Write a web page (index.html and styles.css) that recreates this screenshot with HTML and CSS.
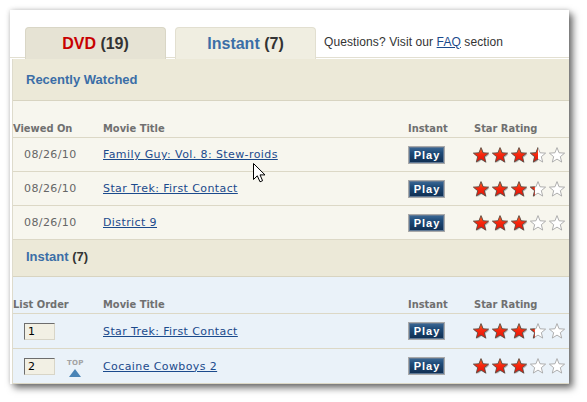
FILE: index.html
```html
<!DOCTYPE html>
<html>
<head>
<meta charset="utf-8">
<link rel="stylesheet" href="styles.css">
</head>
<body>
<svg class="defs" width="0" height="0" aria-hidden="true">
  <defs>
    <linearGradient id="redFill" x1="0" y1="0" x2="0" y2="1">
      <stop offset="0" stop-color="#ff6a2a"/>
      <stop offset="0.45" stop-color="#f8280e"/>
      <stop offset="1" stop-color="#e0140a"/>
    </linearGradient>
    <clipPath id="c50"><rect x="-1" y="-1" width="9" height="19"/></clipPath>
    <clipPath id="c30"><rect x="-1" y="-1" width="5.8" height="19"/></clipPath>
    <g id="sf">
      <polygon points="9,2.6 11.06,7.77 16.61,8.13 12.33,11.68 13.7,17.07 9,14.1 4.3,17.07 5.67,11.68 1.39,8.13 6.94,7.77" fill="#a9a9a9" opacity="0.8"/>
      <polygon points="8,1.6 10.06,6.77 15.61,7.13 11.33,10.68 12.7,16.07 8,13.1 3.3,16.07 4.67,10.68 0.39,7.13 5.94,6.77" fill="url(#redFill)" stroke="#5b4a3f" stroke-width="0.9" stroke-linejoin="round"/>
    </g>
    <g id="se">
      <polygon points="8,1.6 10.06,6.77 15.61,7.13 11.33,10.68 12.7,16.07 8,13.1 3.3,16.07 4.67,10.68 0.39,7.13 5.94,6.77" fill="#fff" stroke="#a6a6a6" stroke-width="0.9" stroke-linejoin="round"/>
    </g>
  </defs>
</svg>

<div class="window">
  <div class="tabbar">
    <div class="tab tab-dvd"><span class="red">DVD</span>&nbsp;<span class="dark">(19)</span></div>
    <div class="tab tab-instant"><span class="blue">Instant</span>&nbsp;<span class="dark">(7)</span></div>
    <div class="questions">Questions? Visit our <a href="#">FAQ</a> section</div>
  </div>

  <div class="content">
    <div class="section-head">Recently Watched</div>
    <div class="area cream">
      <div class="row head">
        <div>Viewed On</div><div>Movie Title</div><div>Instant</div><div>Star Rating</div>
      </div>
      <div class="row">
        <div class="date">08/26/10</div>
        <div><a class="title" href="#">Family Guy: Vol. 8: Stew-roids</a></div>
        <div><span class="play">Play</span></div>
        <div>
          <svg class="stars" width="95" height="18" viewBox="0 0 95 18">
            <use href="#sf"/><g transform="translate(19,0)"><use href="#sf"/></g><g transform="translate(38,0)"><use href="#sf"/></g>
            <g transform="translate(57,0)"><use href="#se"/><use href="#sf" clip-path="url(#c50)"/></g>
            <g transform="translate(76,0)"><use href="#se"/></g>
          </svg>
        </div>
      </div>
      <div class="row">
        <div class="date">08/26/10</div>
        <div><a class="title" href="#">Star Trek: First Contact</a></div>
        <div><span class="play">Play</span></div>
        <div>
          <svg class="stars" width="95" height="18" viewBox="0 0 95 18">
            <use href="#sf"/><g transform="translate(19,0)"><use href="#sf"/></g><g transform="translate(38,0)"><use href="#sf"/></g>
            <g transform="translate(57,0)"><use href="#se"/><use href="#sf" clip-path="url(#c30)"/></g>
            <g transform="translate(76,0)"><use href="#se"/></g>
          </svg>
        </div>
      </div>
      <div class="row">
        <div class="date">08/26/10</div>
        <div><a class="title" href="#">District 9</a></div>
        <div><span class="play">Play</span></div>
        <div>
          <svg class="stars" width="95" height="18" viewBox="0 0 95 18">
            <use href="#sf"/><g transform="translate(19,0)"><use href="#sf"/></g><g transform="translate(38,0)"><use href="#sf"/></g>
            <g transform="translate(57,0)"><use href="#se"/></g>
            <g transform="translate(76,0)"><use href="#se"/></g>
          </svg>
        </div>
      </div>
    </div>

    <div class="section-head second"><span class="blue">Instant</span>&nbsp;<span class="dark">(7)</span></div>
    <div class="area bluebg">
      <div class="row head">
        <div>List Order</div><div>Movie Title</div><div>Instant</div><div>Star Rating</div>
      </div>
      <div class="row tall">
        <div class="order"><input class="num" type="text" value="1"></div>
        <div><a class="title" href="#">Star Trek: First Contact</a></div>
        <div><span class="play">Play</span></div>
        <div>
          <svg class="stars" width="95" height="18" viewBox="0 0 95 18">
            <use href="#sf"/><g transform="translate(19,0)"><use href="#sf"/></g><g transform="translate(38,0)"><use href="#sf"/></g>
            <g transform="translate(57,0)"><use href="#se"/><use href="#sf" clip-path="url(#c30)"/></g>
            <g transform="translate(76,0)"><use href="#se"/></g>
          </svg>
        </div>
      </div>
      <div class="row tall">
        <div class="order"><input class="num" type="text" value="2"><span class="top"><span class="top-label">TOP</span><span class="top-arrow"></span></span></div>
        <div><a class="title" href="#">Cocaine Cowboys 2</a></div>
        <div><span class="play">Play</span></div>
        <div>
          <svg class="stars" width="95" height="18" viewBox="0 0 95 18">
            <use href="#sf"/><g transform="translate(19,0)"><use href="#sf"/></g><g transform="translate(38,0)"><use href="#sf"/></g>
            <g transform="translate(57,0)"><use href="#se"/></g>
            <g transform="translate(76,0)"><use href="#se"/></g>
          </svg>
        </div>
      </div>
    </div>
  </div>
</div>

<svg class="cursor" width="14" height="21" viewBox="0 0 14 21">
  <polygon points="0.5,0.5 0.5,16.5 4.3,12.8 7,18.8 9.6,17.7 7,11.9 12,11.9" fill="#fff" stroke="#000" stroke-width="1" stroke-linejoin="miter"/>
</svg>
</body>
</html>
```

FILE: styles.css
```css
* {
  box-sizing: border-box;
}

html, body {
  margin: 0;
  padding: 0;
  background: #fff;
}

body {
  width: 587px;
  height: 402px;
  overflow: hidden;
  position: relative;
  font-family: "DejaVu Sans", sans-serif;
}

.defs {
  position: absolute;
  width: 0;
  height: 0;
}

.window {
  margin: 10px 0 0 10px;
  width: 559px;
  height: 374px;
  background: #fff;
  overflow: hidden;
  box-shadow: 4px 4px 7px rgba(0, 0, 0, 0.55), 0 0 5px rgba(0, 0, 0, 0.18);
}

.tabbar {
  display: flex;
  align-items: flex-start;
  height: 31px;
  margin-top: 17px;
  padding-left: 15px;
  border-bottom: 1px solid #e2dfd1;
}

.tab {
  flex-shrink: 0;
  width: 141px;
  height: 32px;
  border: 1px solid #d9d6c6;
  border-bottom: 0;
  border-radius: 4px 4px 0 0;
  display: flex;
  align-items: center;
  justify-content: center;
  font: bold 16px "Liberation Sans", Arial, sans-serif;
}

.tab-dvd {
  background: #e6e3d4;
}

.tab-instant {
  margin-left: 9px;
  background: #f0eee1;
  border-color: #e2dfd0;
}

.red {
  color: #c80000;
}

.blue {
  color: #3b6ea7;
}

.dark {
  color: #333;
}

.questions {
  align-self: center;
  margin-left: 8px;
  font: 12px "Liberation Sans", Arial, sans-serif;
  color: #333;
  letter-spacing: 0.1px;
}

.questions a {
  color: #1b4a8c;
}

.content {
  margin: 1px 0 0 2px;
  border-left: 1px solid #dedbcc;
}

.section-head {
  height: 42px;
  padding-left: 13px;
  background: #ece9d8;
  border-bottom: 1px solid #d8d4c1;
  display: flex;
  align-items: center;
  font: bold 13px "Liberation Sans", Arial, sans-serif;
  color: #3b6ea7;
}

.section-head.second {
  height: 37px;
  padding-bottom: 3px;
}

.cream {
  background: #f7f6ee;
}

.bluebg {
  background: #eaf2f9;
}

.row {
  display: grid;
  grid-template-columns: 90px 305px 66px 1fr;
  align-items: center;
  height: 34px;
  border-bottom: 1px solid #dcd8c6;
  font-size: 11px;
  letter-spacing: 0.4px;
}

.row.tall {
  height: 35px;
}

.row.head {
  height: 37px;
  align-items: end;
  padding-bottom: 2px;
  font: bold 11px "DejaVu Sans Condensed", "DejaVu Sans", sans-serif;
  letter-spacing: 0;
  color: #707070;
}

.date {
  padding-left: 11px;
  color: #666;
}

.title {
  color: #1b4a8c;
  text-decoration: underline;
}

.play {
  display: flex;
  align-items: center;
  justify-content: center;
  width: 37px;
  height: 18px;
  border: 1px solid #a9a9a9;
  box-shadow: inset 0 0 0 1px #5f7894;
  background: linear-gradient(#3d6a97 0, #1f4b78 35%, #0f2d50 100%);
  color: #fff;
  font: bold 11px "Liberation Sans", Arial, sans-serif;
  letter-spacing: 1px;
  padding-left: 1px;
}

.stars {
  display: block;
  margin-left: -1px;
}

.order {
  display: flex;
  align-items: center;
  padding-left: 11px;
}

.num {
  width: 31px;
  height: 17px;
  margin: 0;
  padding: 0 0 0 3px;
  border: 1px solid;
  border-color: #6d6d6d #d8d5c7 #d8d5c7 #6d6d6d;
  background: #f2f0e4;
  font: 11px "DejaVu Sans", sans-serif;
  color: #000;
}

.top {
  display: flex;
  flex-direction: column;
  align-items: center;
  margin-left: 12px;
  margin-top: 3px;
}

.top-label {
  font: bold 7px "DejaVu Sans", sans-serif;
  color: #a3a3a3;
  letter-spacing: 0.2px;
}

.top-arrow {
  margin-top: 2px;
  width: 0;
  height: 0;
  border-left: 6px solid transparent;
  border-right: 6px solid transparent;
  border-bottom: 8px solid #4a84b6;
}

.cursor {
  position: absolute;
  left: 253px;
  top: 163px;
}
```
